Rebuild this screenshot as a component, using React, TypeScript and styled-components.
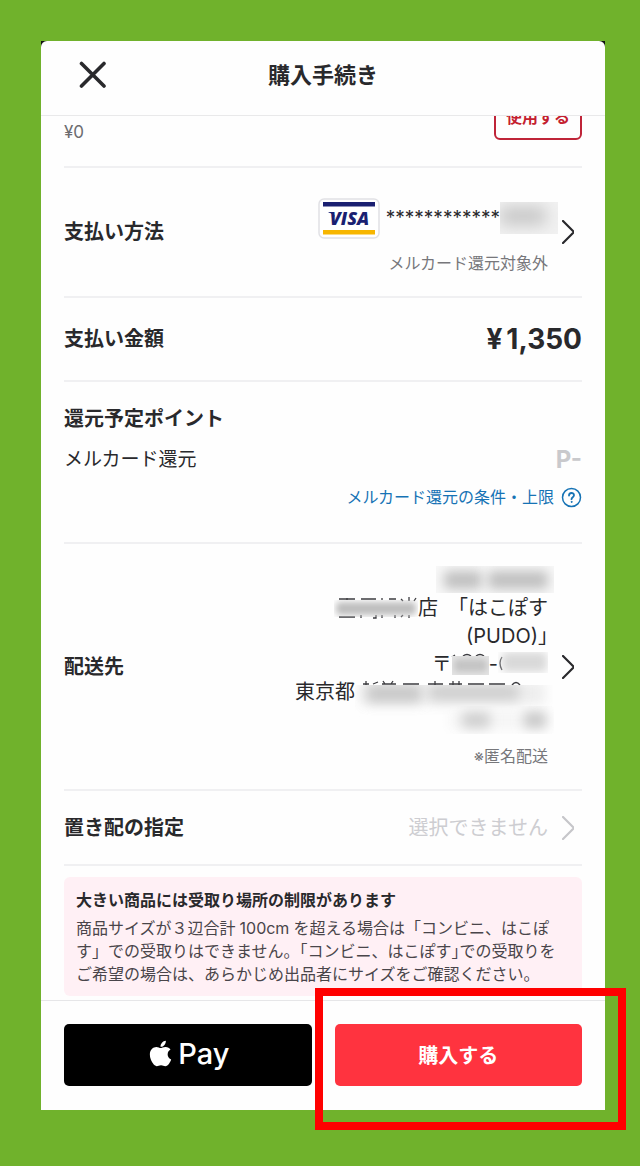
import React from "react";
import styled, { createGlobalStyle } from "styled-components";
import { FaApple } from "react-icons/fa";

const GlobalStyle = createGlobalStyle`
  *, *::before, *::after { box-sizing: border-box; }
  body {
    margin: 0;
    background: #70b22c;
    color: #29292c;
    font-family: Inter, "Noto Sans CJK JP", sans-serif;
    font-size: 20px;
    line-height: 28px;
  }
  h1, h2, p { margin: 0; }
  button { font-family: inherit; cursor: pointer; }
`;

const Page = styled.main`
  padding: 41px 35px 56px 41px;
`;

const Phone = styled.div`
  display: flex;
  flex-direction: column;
  background: #fefefe;
`;

const HeaderBack = styled.div`
  background: #101410;
`;

const Header = styled.header`
  display: grid;
  grid-template-columns: 1fr auto 1fr;
  align-items: center;
  height: 75px;
  padding: 0 38px 6px;
  background: #fefefe;
  border-bottom: 1px solid #e9e9ea;
  border-radius: 6px 6px 0 0;
`;

const Title = styled.h1`
  font-size: 22px;
  font-weight: 600;
`;

const CloseButton = styled.button`
  display: flex;
  width: 28px;
  height: 28px;
  padding: 0;
  border: 0;
  background: none;
  color: #29292c;
`;

const Body = styled.div`
  padding: 0 23px 4px;
  overflow: hidden;
`;

const Row = styled.section<{ $pad: string }>`
  display: flex;
  align-items: center;
  justify-content: space-between;
  padding: ${(p) => p.$pad};
  border-bottom: 2px solid #f0f0f2;
`;

const PointsBalance = styled(Row)`
  align-items: flex-end;
  margin-top: -20px;
`;

const Balance = styled.span`
  font-size: 17px;
  line-height: 16px;
  color: #6c6c70;
`;

const UseButton = styled.button`
  width: 88px;
  height: 44px;
  padding: 0 0 4px;
  border: 2px solid #bf2438;
  border-radius: 6px;
  background: none;
  color: #c4202f;
  font-size: 16px;
  font-weight: 600;
`;

const Label = styled.h2`
  font-size: 20px;
  font-weight: 600;
  line-height: 28px;
`;

const Value = styled.div`
  display: flex;
  align-items: center;
  gap: 14px;
  padding-right: 8px;
`;

const Stack = styled.div<{ $gap: number; $top?: number }>`
  display: flex;
  flex-direction: column;
  align-items: flex-end;
  gap: ${(p) => p.$gap}px;
  padding-top: ${(p) => p.$top ?? 0}px;
`;

const Line = styled.div`
  display: flex;
  align-items: center;
  justify-content: flex-end;
  white-space: nowrap;
`;

const CardLine = styled(Line)`
  height: 40px;
`;

const Digits = styled.span`
  margin-left: 6px;
  font-size: 19px;
`;

const Small = styled.p`
  font-size: 16px;
  line-height: 24px;
  color: #77777b;
`;

const Amount = styled.strong`
  font-size: 28px;
  font-weight: 700;
`;

const Yen = styled.span`
  margin-right: 4px;
`;

const Points = styled.section`
  display: flex;
  flex-direction: column;
  gap: 12px;
  padding: 23px 0 33px;
  border-bottom: 2px solid #f0f0f2;
`;

const PointsLine = styled.div`
  display: flex;
  align-items: center;
  justify-content: space-between;
  padding-top: 2px;
  font-size: 19px;
  line-height: 26px;
`;

const PointsValue = styled.strong`
  font-size: 24px;
  font-weight: 700;
  color: #c9c9cc;
`;

const TermsLink = styled.a`
  display: flex;
  align-items: center;
  align-self: flex-end;
  gap: 7px;
  font-size: 16px;
  line-height: 24px;
  color: #1673b5;
  text-decoration: none;
`;

const Muted = styled.span`
  color: #cdcdd1;
`;

const Half = styled.span`
  font-feature-settings: "halt";
`;

const MaskSvg = styled.svg<{ $over?: number }>`
  flex: none;
  overflow: visible;
  margin-right: -${(p) => p.$over ?? 0}px;
`;

const Notice = styled.aside`
  margin-top: 11px;
  padding: 11px 12px 10px;
  border-radius: 6px;
  background: #fff0f5;
  font-size: 16px;
  line-height: 23px;
  color: #49454a;
`;

const NoticeTitle = styled.h2`
  margin-bottom: 5px;
  font-size: 16px;
  font-weight: 600;
  line-height: 24px;
  color: #29292c;
`;

const Measure = styled.span`
  margin: 0 4px;
`;

const Footer = styled.footer`
  display: grid;
  grid-template-columns: 1fr 1fr;
  gap: 23px;
  padding: 23px 23px 24px;
  border-top: 1px solid #e6e6e8;
`;

const ActionButton = styled.button<{ $tone: string }>`
  display: flex;
  align-items: center;
  justify-content: center;
  gap: 4px;
  width: 100%;
  height: 62px;
  padding: 0 0 2px;
  border: 0;
  border-radius: 5px;
  background: ${(p) => p.$tone};
  color: #fff;
  font-size: 20px;
  font-weight: 600;
`;

const PayButton = styled(ActionButton)`
  gap: 3px;
  padding: 0 0 4px;
`;

const PayWord = styled.span`
  font-size: 29px;
  font-weight: 500;
`;

const Highlighted = styled.div`
  position: relative;
  &::after {
    content: "";
    position: absolute;
    inset: -36px -44px -44px -20px;
    border: 8px solid #ff0000;
    pointer-events: none;
  }
`;

function Chevron({ color }: { color: string }) {
  return (
    <svg width="12" height="24" viewBox="0 0 12 24" fill="none" stroke={color} strokeWidth="2.2" strokeLinecap="round" strokeLinejoin="round" aria-hidden="true">
      <path d="M1 1L12 12L1 23" />
    </svg>
  );
}

function VisaCard() {
  return (
    <svg width="62" height="41" viewBox="0 0 62 41" role="img" aria-label="VISA">
      <rect x="1" y="1" width="60" height="39" rx="5" fill="#fff" stroke="#e1e1e5" strokeWidth="1.5" />
      <rect x="5" y="4" width="52" height="4.5" fill="#1a1f71" />
      <rect x="5" y="32" width="52" height="4.5" fill="#f7b600" />
      <path d="M10.5 14H15L17.500 20C16 17 14 15.300 10.500 14.500Z" fill="#1a1f71" />
      <text x="31.500" y="27" textAnchor="middle" fontFamily="Open Sans" fontSize="18" fontWeight="800" fontStyle="italic" fill="#1a1f71">VISA</text>
    </svg>
  );
}

type Blob = [x: number, y: number, w: number, h: number, shade: string];

/* A frosted patch over private text: a soft-edged pane clipped at its top,
   with the few strokes that stick out around it. */
function Mask({ width, height = 28, top = 0, pane = height - top, over, base, blur = 4, blobs, marks }: {
  width: number;
  height?: number;
  top?: number;
  pane?: number;
  over?: number;
  base?: string;
  blur?: number;
  blobs: Blob[];
  marks?: string;
}) {
  const id = React.useId();
  return (
    <MaskSvg width={width} height={height} $over={over} aria-hidden="true">
      <defs>
        <filter id={id} x="-100%" y="-200%" width="300%" height="500%">
          <feGaussianBlur stdDeviation={blur} />
        </filter>
      </defs>
      {marks && <path d={marks} stroke="#3c3c40" strokeWidth="1.3" fill="none" />}
      <svg y={top} width={width} height={pane} overflow="hidden">
        {base && <rect width={width} height={pane} fill={base} />}
        {blobs.map(([x, y, w, h, shade], i) => (
          <rect key={i} x={x} y={y} width={w} height={h} rx="4" fill={shade} filter={`url(#${id})`} />
        ))}
      </svg>
    </MaskSvg>
  );
}

export default function App() {
  return (
    <Page>
      <GlobalStyle />
      <Phone>
        <HeaderBack>
          <Header>
            <CloseButton aria-label="閉じる">
              <svg width="28" height="28" viewBox="0 0 28 28" stroke="currentColor" strokeWidth="3.6" strokeLinecap="round">
                <path d="M2.500 2.500L25 25M25 2.500L2.500 25" />
              </svg>
            </CloseButton>
            <Title>購入手続き</Title>
          </Header>
        </HeaderBack>

        <Body>
          <PointsBalance $pad="0 0 26px">
            <Balance>¥0</Balance>
            <UseButton>使用する</UseButton>
          </PointsBalance>

          <Row $pad="21px 0">
            <Label>支払い方法</Label>
            <Value>
              <Stack $gap={13} $top={9}>
                <CardLine>
                  <VisaCard />
                  <Digits>************</Digits>
                  <Mask width={58} height={32} over={10} base="#f1f1f1" blur={8} blobs={[[0, 5, 46, 18, "#c6c6c6"]]} />
                </CardLine>
                <Small>メルカード還元対象外</Small>
              </Stack>
              <Chevron color="#29292c" />
            </Value>
          </Row>

          <Row $pad="27px 0">
            <Label>支払い金額</Label>
            <Amount><Yen>¥</Yen>1,350</Amount>
          </Row>

          <Points>
            <Label>還元予定ポイント</Label>
            <PointsLine>
              <span>メルカード還元</span>
              <PointsValue>P-</PointsValue>
            </PointsLine>
            <TermsLink href="#terms">
              メルカード還元の条件・上限
              <svg width="21" height="21" viewBox="0 0 21 21" fill="none" stroke="currentColor" strokeWidth="1.5" strokeLinecap="round" aria-hidden="true">
                <circle cx="10.500" cy="10.500" r="9" />
                <path d="M8 8.600C8 5.200 13 5.200 13 8.300C13 10.200 10.500 10.200 10.500 12.200" strokeWidth="1.800" />
                <circle cx="10.500" cy="14.900" r="0.500" fill="currentColor" strokeWidth="1" />
              </svg>
            </TermsLink>
          </Points>

          <Row $pad="22px 0 21px">
            <Label>配送先</Label>
            <Value>
              <Stack $gap={10}>
                <div>
                  <Line>
                    <Mask width={118} over={6} pane={27} base="#f8f8f8" blur={6} blobs={[[8, 5, 38, 18, "#c0c0c0"], [52, 5, 60, 18, "#c0c0c0"]]} />
                  </Line>
                  <Line>
                    <Mask
                      width={84}
                      top={6}
                      pane={17}
                      blur={3}
                      blobs={[[2, 2, 80, 13, "#bebebe"]]}
                      marks="M5 5H21M13 4V6M5 23H21M27 5H42M27 21V24M42 21V24H39M48 4V6M55 5H62M48 21V24M61 21V24M67 5L69 7M75 3V7M82 4L80 7M67 23L69 21M75 21V24"
                    />
                    <span>店　<Half>「</Half>はこぽす</span>
                  </Line>
                  <Line>
                    <span>(PUDO)<Half>」</Half></span>
                  </Line>
                  <Line>
                    <span>〒</span>
                    <Mask width={37} top={6} pane={19} blur={3} base="#e4e4e4" blobs={[[2, 3, 33, 13, "#c4c4c4"]]} marks="M0 7L3 5M11 6Q15 3 19 6M24 6Q28 3 32 6" />
                    <span>-</span>
                    <Mask width={50} top={2} pane={21} blur={4} blobs={[[4, 0, 45, 20, "#d9d9d9"]]} marks="M4 7Q0 13 4 20" />
                  </Line>
                  <Line>
                    <span>東京都</span>
                    <Mask
                      width={198}
                      over={5}
                      top={7}
                      pane={32}
                      blur={6}
                      blobs={[[4, -4, 186, 24, "#eeeeee"], [12, 0, 54, 17, "#c8c8c8"], [74, 0, 90, 15, "#cecece"]]}
                      marks="M8 6H14M11 3V7M18 6L23 4M28 3L30 6M38 3L36 6M27 6H41M48 6H64M73 6H88M80 3V7M94 6H107M98 3V7M104 3V7M113 6H129M134 6H150M157 7Q161 2 165 7"
                    />
                  </Line>
                  <Line>
                    <Mask width={116} over={6} blur={6} blobs={[[12, 4, 98, 20, "#f6f6f6"], [24, 6, 28, 16, "#cfcfcf"], [86, 6, 22, 16, "#c8c8c8"]]} />
                  </Line>
                </div>
                <Small>※匿名配送</Small>
              </Stack>
              <Chevron color="#29292c" />
            </Value>
          </Row>

          <Row $pad="23px 0 22px">
            <Label>置き配の指定</Label>
            <Value>
              <Muted>選択できません</Muted>
              <Chevron color="#c6c6ca" />
            </Value>
          </Row>

          <Notice>
            <NoticeTitle>大きい商品には受取り場所の制限があります</NoticeTitle>
            <p>
              商品サイズが３辺合計<Measure>100cm</Measure>を超える場合は「コンビニ、はこぽ
              <br />
              す」での受取りはできません。「コンビニ、はこぽす<Half>」</Half>での受取りを
              <br />
              ご希望の場合は、あらかじめ出品者にサイズをご確認ください。
            </p>
          </Notice>
        </Body>

        <Footer>
          <PayButton $tone="#000" aria-label="Apple Pay">
            <FaApple size={29} />
            <PayWord>Pay</PayWord>
          </PayButton>
          <Highlighted>
            <ActionButton $tone="#ff333f">購入する</ActionButton>
          </Highlighted>
        </Footer>
      </Phone>
    </Page>
  );
}
